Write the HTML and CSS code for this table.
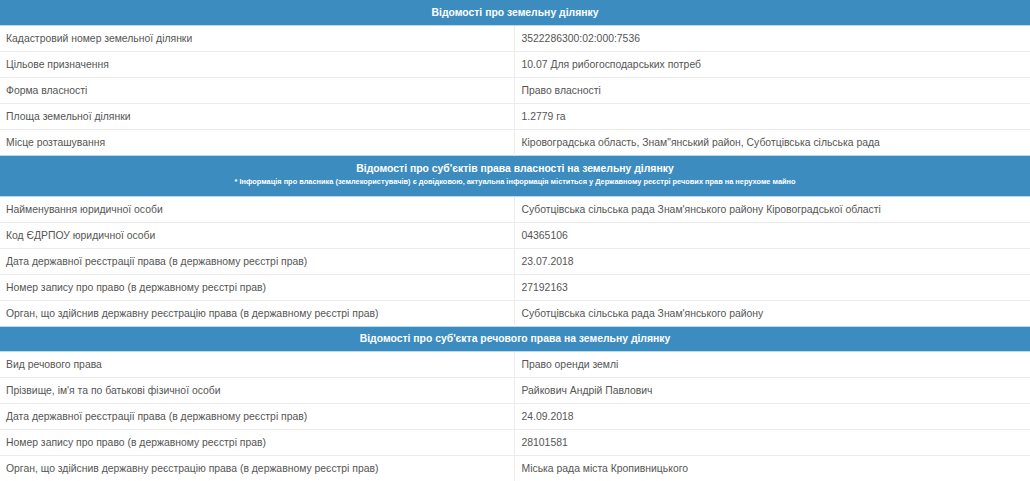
FILE: index.html
```html
<!DOCTYPE html>
<html lang="uk">
<head>
<meta charset="utf-8">
<link rel="stylesheet" href="styles.css">
</head>
<body>
<table class="info">
  <colgroup><col class="c-label"><col class="c-value"></colgroup>
  <tr class="head"><th colspan="2">Відомості про земельну ділянку</th></tr>
  <tr><td>Кадастровий номер земельної ділянки</td><td>3522286300:02:000:7536</td></tr>
  <tr><td>Цільове призначення</td><td>10.07 Для рибогосподарських потреб</td></tr>
  <tr><td>Форма власності</td><td>Право власності</td></tr>
  <tr><td>Площа земельної ділянки</td><td>1.2779 га</td></tr>
  <tr><td>Місце розташування</td><td>Кіровоградська область, Знам"янський район, Суботцівська сільська рада</td></tr>
  <tr class="head head-note"><th colspan="2">Відомості про суб'єктів права власності на земельну ділянку<span class="note">* Інформація про власника (землекористувачів) є довідковою, актуальна інформація міститься у Державному реєстрі речових прав на нерухоме майно</span></th></tr>
  <tr><td>Найменування юридичної особи</td><td>Суботцівська сільська рада Знам'янського району Кіровоградської області</td></tr>
  <tr><td>Код ЄДРПОУ юридичної особи</td><td>04365106</td></tr>
  <tr><td>Дата державної реєстрації права (в державному реєстрі прав)</td><td>23.07.2018</td></tr>
  <tr><td>Номер запису про право (в державному реєстрі прав)</td><td>27192163</td></tr>
  <tr><td>Орган, що здійснив державну реєстрацію права (в державному реєстрі прав)</td><td>Суботцівська сільська рада Знам'янського району</td></tr>
  <tr class="head"><th colspan="2">Відомості про суб'єкта речового права на земельну ділянку</th></tr>
  <tr><td>Вид речового права</td><td>Право оренди землі</td></tr>
  <tr><td>Прізвище, ім'я та по батькові фізичної особи</td><td>Райкович Андрій Павлович</td></tr>
  <tr><td>Дата державної реєстрації права (в державному реєстрі прав)</td><td>24.09.2018</td></tr>
  <tr><td>Номер запису про право (в державному реєстрі прав)</td><td>28101581</td></tr>
  <tr><td>Орган, що здійснив державну реєстрацію права (в державному реєстрі прав)</td><td>Міська рада міста Кропивницького</td></tr>
</table>
</body>
</html>
```

FILE: styles.css
```css
html, body {
  margin: 0;
  padding: 0;
  background: #ffffff;
}
body {
  font-family: "Liberation Sans", Arial, sans-serif;
  font-size: 10.4px;
  color: #555555;
}
.info {
  width: 1030px;
  border-collapse: collapse;
  table-layout: fixed;
}
.c-label { width: 514px; }
.info tr { height: 26px; }
.info td {
  padding: 0 6px;
  border-top: 1px solid #ececec;
  vertical-align: middle;
  white-space: nowrap;
  line-height: 13px;
}
.info td + td {
  border-left: 1px solid #ececec;
  padding-left: 7px;
}
.info tr.head { height: 25px; }
.info tr.head-note { height: 41px; }
.head th {
  background: #3c8cbf;
  color: #ffffff;
  font-weight: bold;
  font-size: 10.4px;
  text-align: center;
  padding: 0;
  border-top: 1px solid #b6daf0;
  border-bottom: 1px solid #b6daf0;
  line-height: 13px;
}
.info tr:first-child th { border-top: none; }
.head-note th {
  padding-bottom: 1px;
}
.note {
  display: block;
  font-size: 7.4px;
  line-height: 13px;
  font-weight: bold;
}
```
